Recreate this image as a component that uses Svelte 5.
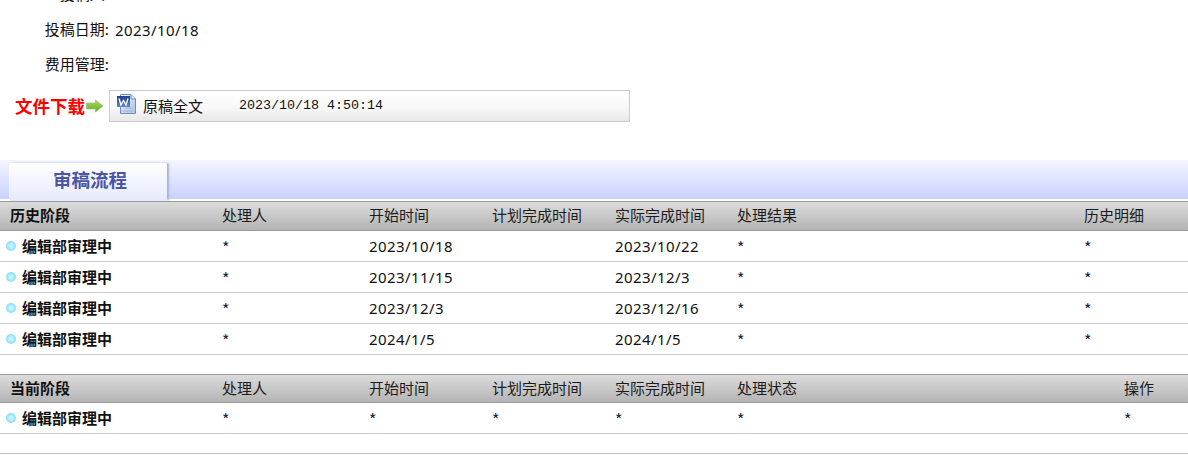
<script lang="ts">
	const history = [
		{ start: '2023/10/18', end: '2023/10/22' },
		{ start: '2023/11/15', end: '2023/12/3' },
		{ start: '2023/12/3', end: '2023/12/16' },
		{ start: '2024/1/5', end: '2024/1/5' }
	];
</script>

<div class="page">
	<div class="meta">
		<div class="meta-row"><span class="label">投稿人:</span></div>
		<div class="meta-row"><span class="label">投稿日期:</span><span class="num">2023/10/18</span></div>
		<div class="meta-row"><span class="label">费用管理:</span></div>
	</div>

	<div class="download">
		<span class="download-title">文件下载</span>
		<svg class="arrow" width="18" height="14" viewBox="0 0 18 14">
			<defs>
				<linearGradient id="arrowFill" x1="0" y1="0" x2="0" y2="1">
					<stop offset="0" stop-color="#b4dc5a" />
					<stop offset="1" stop-color="#5da82a" />
				</linearGradient>
			</defs>
			<path d="M0.5 4H9.5V1L17 7L9.5 13V10H0.5Z" fill="url(#arrowFill)" stroke="#9cc27c" stroke-width="0.8" />
		</svg>
		<div class="file-box">
			<svg class="word" width="22" height="22" viewBox="0 0 22 22">
				<defs>
					<linearGradient id="pageFill" x1="0" y1="0" x2="1" y2="1">
						<stop offset="0" stop-color="#f4f8fd" />
						<stop offset="1" stop-color="#a9c1e2" />
					</linearGradient>
					<linearGradient id="wordFill" x1="0" y1="0" x2="0" y2="1">
						<stop offset="0" stop-color="#24408c" />
						<stop offset="1" stop-color="#5f86c8" />
					</linearGradient>
				</defs>
				<path d="M4.5 1.5H15L19.5 6V20.5H4.5Z" fill="url(#pageFill)" stroke="#6f8db8" />
				<path d="M15 1.5V6H19.5" fill="#dfe9f6" stroke="#6f8db8" />
				<path d="M9 15H17M6 18H17" stroke="#9db5d6" />
				<rect x="1" y="3" width="13" height="11" fill="url(#wordFill)" />
				<path d="M3 5.5L5 12L7.5 7.5L10 12L12 5.5" fill="none" stroke="#fff" stroke-width="1.3" />
			</svg>
			<span class="file-name">原稿全文</span>
			<span class="file-time">2023/10/18 4:50:14</span>
		</div>
	</div>

	<div class="tab-band">
		<div class="tab">审稿流程</div>
	</div>

	<div class="table history">
		<div class="row head">
			<div class="first">历史阶段</div>
			<div>处理人</div>
			<div>开始时间</div>
			<div>计划完成时间</div>
			<div>实际完成时间</div>
			<div>处理结果</div>
			<div>历史明细</div>
		</div>
		{#each history as item}
			<div class="row">
				<div class="stage"><i class="dot"></i>编辑部审理中</div>
				<div class="star">*</div>
				<div class="num">{item.start}</div>
				<div></div>
				<div class="num">{item.end}</div>
				<div class="star">*</div>
				<div class="star">*</div>
			</div>
		{/each}
	</div>

	<div class="table current">
		<div class="row head">
			<div class="first">当前阶段</div>
			<div>处理人</div>
			<div>开始时间</div>
			<div>计划完成时间</div>
			<div>实际完成时间</div>
			<div>处理状态</div>
			<div>操作</div>
		</div>
		<div class="row">
			<div class="stage"><i class="dot"></i>编辑部审理中</div>
			<div class="star">*</div>
			<div class="star">*</div>
			<div class="star">*</div>
			<div class="star">*</div>
			<div class="star">*</div>
			<div class="star">*</div>
		</div>
	</div>

	<div class="foot"></div>
</div>

<style>
	:global(body) {
		margin: 0;
		background: #fff;
	}

	.page {
		height: 464px;
		overflow: hidden;
		font-family: "Noto Sans CJK SC", "Noto Sans", sans-serif;
		font-size: 15px;
		color: #111;
	}

	.meta {
		margin-top: -23px;
	}

	.meta-row {
		height: 35px;
		display: flex;
		align-items: center;
		gap: 6px;
	}

	.label {
		width: 65px;
		margin-left: 44px;
		padding-bottom: 2px;
		text-align: right;
		white-space: nowrap;
	}

	.num {
		font-family: "Noto Sans", sans-serif;
		letter-spacing: 0.42px;
	}

	.download {
		display: flex;
		align-items: center;
		margin-top: 8px;
		padding-left: 15px;
	}

	.download-title {
		width: 70px;
		padding-bottom: 2px;
		font-size: 17.5px;
		font-weight: 700;
		color: #f00;
		white-space: nowrap;
	}

	.arrow {
		margin-left: 1px;
	}

	.file-box {
		box-sizing: border-box;
		width: 521px;
		height: 32px;
		margin-left: 5px;
		display: flex;
		align-items: center;
		padding-left: 6px;
		border: 1px solid #ccc;
		background: linear-gradient(#fff, #f8f8f8 55%, #e8e8e8);
	}

	.word {
		margin-top: -4px;
	}

	.file-name {
		margin-left: 5px;
		width: 96px;
		padding-bottom: 1px;
	}

	.file-time {
		font-family: "Liberation Mono", monospace;
		font-size: 13.33px;
		padding-bottom: 1px;
	}

	.tab-band {
		height: 39px;
		margin-top: 38px;
		display: flex;
		align-items: flex-end;
		padding-left: 9px;
		background: linear-gradient(#f4f5ff, #c9d2ff);
		border-bottom: 1px solid #fff;
	}

	.tab {
		box-sizing: border-box;
		width: 158px;
		height: 37px;
		margin-bottom: -1px;
		padding-left: 44px;
		font-size: 18.5px;
		font-weight: 700;
		line-height: 33px;
		color: #4a56a6;
		background: linear-gradient(#fff, #e6eafd);
		border-radius: 2px 2px 0 0;
		box-shadow: 2px 0 2px #a9b2d8;
	}

	.row {
		display: grid;
		align-items: center;
		height: 31px;
		padding-bottom: 1px;
		box-sizing: border-box;
		border-bottom: 1px solid #ccc;
	}

	.history .row {
		grid-template-columns: 222px 147px 123px 123px 122px 347px 104px;
	}

	.current .row {
		grid-template-columns: 222px 147px 123px 123px 122px 387px 64px;
	}

	.head {
		padding-bottom: 3px;
		border-top: 1px solid #999;
		border-bottom: 1px solid #999;
		background: linear-gradient(#dcdcdc, #b4b4b4);
		color: #1c1c1c;
	}

	.history .row.head {
		height: 30px;
		margin-top: 1px;
	}

	.current {
		margin-top: 19px;
	}

	.current .row.head {
		height: 29px;
	}

	.first {
		padding-left: 10px;
		font-weight: 700;
		color: #111;
	}

	.stage {
		display: flex;
		align-items: center;
		padding-bottom: 1px;
		font-weight: 700;
	}

	.star {
		padding-top: 3px;
		font-size: 16px;
		color: #1a2340;
	}

	.dot {
		width: 10px;
		height: 10px;
		margin: 2px 6px 0;
		border-radius: 50%;
		background: radial-gradient(circle, #c4f3ff 20%, #86def6 70%, #6fcbea);
	}

	.foot {
		height: 0;
		margin-top: 19px;
		border-top: 1px solid #bbb;
	}
</style>
